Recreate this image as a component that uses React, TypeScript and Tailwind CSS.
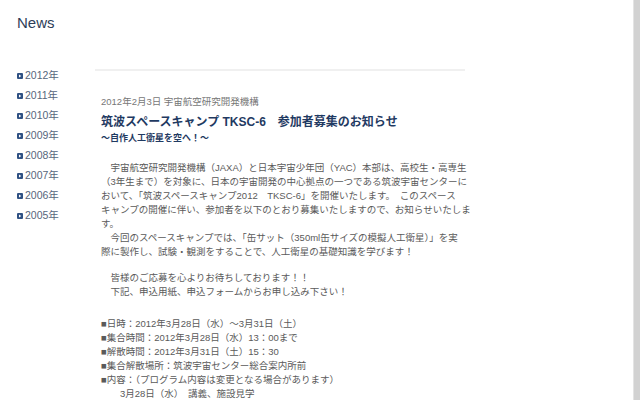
import React from 'react';

const years = ['2012年', '2011年', '2010年', '2009年', '2008年', '2007年', '2006年', '2005年'];

const bodyLines = [
  '　宇宙航空研究開発機構（JAXA）と日本宇宙少年団（YAC）本部は、高校生・高専生',
  '（3年生まで）を対象に、日本の宇宙開発の中心拠点の一つである筑波宇宙センターに',
  'おいて、「筑波スペースキャンプ2012　TKSC-6」を開催いたします。　このスペース',
  'キャンプの開催に伴い、参加者を以下のとおり募集いたしますので、お知らせいたしま',
  'す。',
  '　今回のスペースキャンプでは、「缶サット（350ml缶サイズの模擬人工衛星）」を実',
  '際に製作し、試験・観測をすることで、人工衛星の基礎知識を学びます！',
];

const appealLines = [
  '　皆様のご応募を心よりお待ちしております！！',
  '　下記、申込用紙、申込フォームからお申し込み下さい！',
];

const infoLines = [
  '■日時：2012年3月28日（水）〜3月31日（土）',
  '■集合時間：2012年3月28日（水）13：00まで',
  '■解散時間：2012年3月31日（土）15：30',
  '■集合解散場所：筑波宇宙センター総合案内所前',
  '■内容：（プログラム内容は変更となる場合があります）',
  '　　3月28日（水）　講義、施設見学',
];

const Bullet: React.FC = () => (
  <svg width="6" height="6" viewBox="0 0 6 6" className="shrink-0">
    <rect x="0" y="0" width="6" height="6" rx="1" fill="#2f5183" />
    <path d="M2 1.5 L4.3 3 L2 4.5 Z" fill="#ffffff" />
  </svg>
);

const App: React.FC = () => {
  const font = { fontFamily: '"Liberation Sans", "Noto Sans CJK JP", sans-serif' };

  return (
    <div className="flex h-[400px] w-[640px] overflow-hidden bg-white" style={font}>
      <div className="flex-1">
        {/* Header */}
        <div className="pl-[17px] pt-[13px] text-[15px] leading-[20px] text-[#2d3e58]">News</div>

        <div className="flex">
          {/* Year list */}
          <ul className="w-[95px] pl-[17px] pt-[33px]">
            {years.map((y) => (
              <li key={y} className="flex h-[20px] items-center gap-[2px] text-[10.5px] text-[#56667c]">
                <Bullet />
                <span>{y}</span>
              </li>
            ))}
          </ul>

          {/* Article */}
          <div className="mt-[36px] w-[370px]">
            <div className="h-[2px] bg-[#f0f0f0]" />
            <div className="px-[6px]">
              <div className="mt-[24px] text-[9.5px] leading-[14px] text-[#777777]">
                2012年2月3日 宇宙航空研究開発機構
              </div>
              <h1 className="mt-[5px] whitespace-pre text-[12px] font-bold leading-[16px] text-[#1f3a62]">
                筑波スペースキャンプ TKSC-6　参加者募集のお知らせ
              </h1>
              <div className="mt-[2px] text-[9px] font-bold leading-[12px] text-[#1f3a62]">
                〜自作人工衛星を空へ！〜
              </div>

              <div className="mt-[17px] text-[9.5px] leading-[14px] text-[#5a5a5a]">
                {bodyLines.map((l, i) => (
                  <div key={i} className="whitespace-pre">{l}</div>
                ))}
                <div className="mt-[12px]">
                  {appealLines.map((l, i) => (
                    <div key={i} className="whitespace-pre">{l}</div>
                  ))}
                </div>
                <div className="mt-[18px]">
                  {infoLines.map((l, i) => (
                    <div key={i} className="whitespace-pre">{l}</div>
                  ))}
                </div>
              </div>
            </div>
          </div>
        </div>
      </div>

      {/* Scrollbar edge */}
      <div className="w-[7px] border-l border-[#e4e4e4] bg-[#d2d2d2]" />
    </div>
  );
};

export default App;
